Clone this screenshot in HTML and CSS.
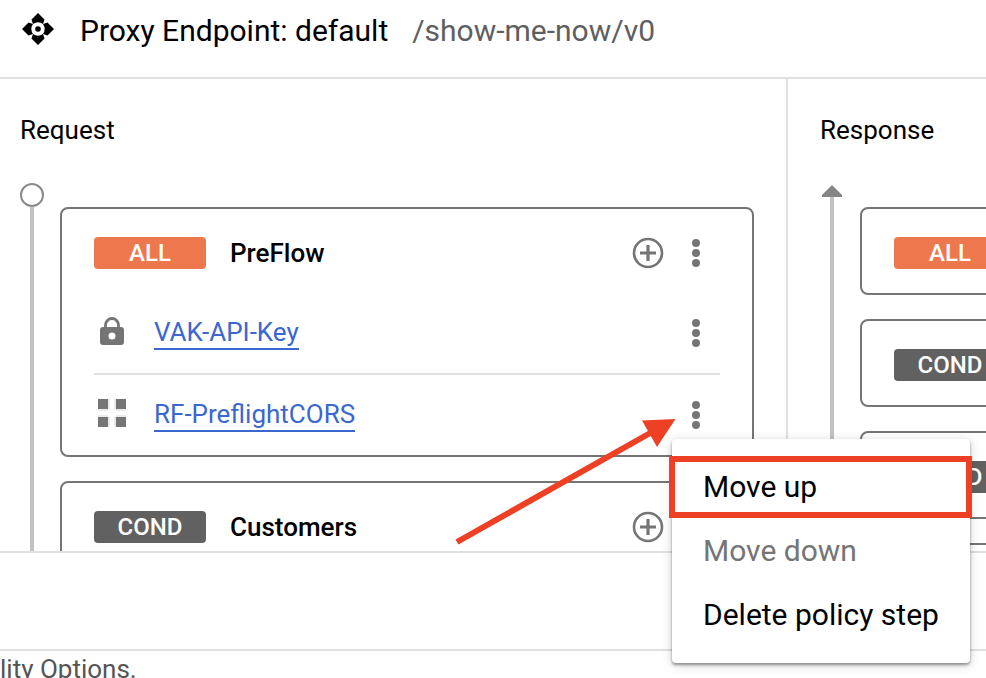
FILE: index.html
```html
<!DOCTYPE html>
<html lang="en">
<head>
<meta charset="utf-8">
<title>Proxy Endpoint: default</title>
<link rel="stylesheet" href="styles.css">
</head>
<body>
<svg class="sprite" aria-hidden="true">
  <symbol id="kebab" viewBox="0 0 48 48">
    <circle cx="24" cy="14" r="4"/><circle cx="24" cy="24" r="4"/><circle cx="24" cy="34" r="4"/>
  </symbol>
  <symbol id="plus" viewBox="0 0 48 48">
    <circle cx="24" cy="24" r="14" fill="none" stroke="currentColor" stroke-width="2.6"/>
    <path d="M24 16v16M16 24h16" stroke="currentColor" stroke-width="3.2"/>
  </symbol>
</svg>

<header class="topbar">
  <svg class="endpoint-icon" viewBox="0 0 32 32" aria-hidden="true">
    <path d="M16 0l6.500 6.500L21 11a9 9 0 0 0-10 0L9.500 6.500z"/>
    <path d="M16 32l6.500-6.500L21 21a9 9 0 0 1-10 0L9.500 25.500z"/>
    <path d="M0 16l6.500-6.500L11 11a9 9 0 0 0 0 10L6.500 22.500z"/>
    <path d="M32 16l-6.500-6.500L21 11a9 9 0 0 1 0 10L25.500 22.500z"/>
    <circle cx="16" cy="16" r="2.800"/>
  </svg>
  <h1 class="title">Proxy Endpoint: default</h1>
  <span class="path">/show-me-now/v0</span>
</header>

<main class="flows">
  <section class="panel">
    <h2 class="panel-title">Request</h2>
    <div class="track">
      <div class="rail">
        <svg class="rail-start" viewBox="0 0 24 24" aria-hidden="true"><circle cx="12" cy="12" r="11"/></svg>
      </div>
      <div class="cards">
        <article class="card">
          <div class="card-head">
            <span class="badge badge-all">ALL</span>
            <h3 class="card-name">PreFlow</h3>
            <button class="icon-button" type="button" aria-label="Add step"><svg><use href="#plus"/></svg></button>
            <button class="icon-button" type="button" aria-label="Flow actions"><svg><use href="#kebab"/></svg></button>
          </div>
          <ul class="steps">
            <li class="step">
              <svg class="step-icon" viewBox="0 0 36 36" aria-hidden="true">
                <path fill-rule="evenodd" d="M9 12h18q3 0 3 3V27q0 3-3 3H9q-3 0-3-3V15q0-3 3-3zM18 17.500a3.500 3.500 0 1 0 0 7a3.500 3.500 0 0 0 0-7z"/>
                <path d="M11.500 14V10a6.500 6.500 0 0 1 13 0V14" fill="none" stroke="currentColor" stroke-width="2.800"/>
              </svg>
              <a class="step-link" href="#vak-api-key">VAK-API-Key</a>
              <button class="icon-button" type="button" aria-label="VAK-API-Key actions"><svg><use href="#kebab"/></svg></button>
            </li>
            <li class="step">
              <svg class="step-icon" viewBox="0 0 36 36" aria-hidden="true">
                <path d="M4 2h10v10H4zM22 2h10v10H22zM4 20h10v10H4zM22 20h10v10H22z"/>
                <path opacity=".15" d="M14 2h2v10h-2zM20 2h2v10h-2zM14 20h2v10h-2zM20 20h2v10h-2zM4 12h10v2H4zM22 12h10v2H22zM4 18h10v2H4zM22 18h10v2H22z"/>
              </svg>
              <a class="step-link" href="#rf-preflightcors">RF-PreflightCORS</a>
              <button class="icon-button" type="button" aria-label="RF-PreflightCORS actions" aria-haspopup="menu" aria-expanded="true"><svg><use href="#kebab"/></svg></button>
            </li>
          </ul>
        </article>
        <article class="card">
          <div class="card-head">
            <span class="badge badge-cond">COND</span>
            <h3 class="card-name">Customers</h3>
            <button class="icon-button" type="button" aria-label="Add step"><svg><use href="#plus"/></svg></button>
            <button class="icon-button" type="button" aria-label="Flow actions"><svg><use href="#kebab"/></svg></button>
          </div>
        </article>
      </div>
    </div>
  </section>

  <section class="panel panel-response">
    <h2 class="panel-title">Response</h2>
    <div class="track">
      <div class="rail">
        <svg class="rail-start rail-arrow" viewBox="0 0 24 24" aria-hidden="true"><path d="M12 2L22 12v2H2v-2z"/></svg>
      </div>
      <div class="cards">
        <article class="card"><div class="card-head"><span class="badge badge-all">ALL</span></div></article>
        <article class="card"><div class="card-head"><span class="badge badge-cond">COND</span></div></article>
        <article class="card"><div class="card-head"><span class="badge badge-cond">COND</span></div></article>
        <article class="card"><div class="card-head"><span class="badge badge-cond">COND</span></div></article>
      </div>
    </div>
  </section>
</main>

<div class="strip"></div>
<footer class="footer">lity Options.</footer>

<div class="menu" role="menu">
  <button class="menu-item menu-item-marked" type="button" role="menuitem">Move up</button>
  <button class="menu-item" type="button" role="menuitem" disabled>Move down</button>
  <button class="menu-item" type="button" role="menuitem">Delete policy step</button>
</div>

<svg class="pointer" viewBox="0 0 222 130" aria-hidden="true">
  <path d="M3 126L198 16" stroke="currentColor" stroke-width="6"/>
  <path d="M188 4.500L221.500 3L203 31z"/>
</svg>
</body>
</html>
```
FILE: styles.css
```css
* {
  box-sizing: border-box;
}

body {
  position: relative;
  display: flex;
  flex-direction: column;
  height: 100vh;
  margin: 0;
  overflow: hidden;
  background: #fff;
  color: #000;
  font-family: Roboto, "Liberation Sans", sans-serif;
  font-size: 26px;
  line-height: 32px;
}

h1, h2, h3, ul {
  margin: 0;
  padding: 0;
  font-size: inherit;
  font-weight: 400;
}

button {
  padding: 0;
  border: 0;
  background: none;
  color: inherit;
  font: inherit;
}

svg {
  display: block;
  fill: currentColor;
}

.sprite {
  position: absolute;
  width: 0;
  height: 0;
}

.topbar {
  display: flex;
  align-items: center;
  flex: none;
  padding: 11px 22px 30px;
  border-bottom: 2px solid #e0e0e0;
  font-size: 30px;
}

.endpoint-icon {
  width: 32px;
  height: 32px;
}

.title {
  margin: 4px 24px 0 26px;
}

.path {
  margin-top: 4px;
  color: #5f5f5f;
}

.flows {
  display: grid;
  grid-template-columns: minmax(0, 1fr) 198px;
  flex: 1;
  min-height: 0;
  overflow: hidden;
}

.panel {
  display: flex;
  flex-direction: column;
  padding: 35px 32px 0 20px;
  border-right: 2px solid #e0e0e0;
  overflow: hidden;
}

.panel-response {
  padding: 35px 0 0 32px;
  border-right: 0;
}

.panel-title {
  margin-bottom: 37px;
}

.track {
  display: flex;
  flex: 1;
  gap: 16px;
}

.rail {
  flex: none;
  width: 24px;
  background: linear-gradient(#c2c2c2, #c2c2c2) center / 4px 100% no-repeat;
}

.rail-start {
  width: 24px;
  height: 24px;
  background: #fff;
  fill: #fff;
  stroke: #8a8a8a;
  stroke-width: 2px;
}

.rail-arrow {
  background: linear-gradient(#fff, #fff) top / 100% 6px no-repeat;
  fill: #858585;
  stroke: none;
}

.cards {
  display: flex;
  flex: 1;
  flex-direction: column;
  gap: 24px;
  padding-top: 24px;
}

.card {
  flex: none;
  min-width: 320px;
  padding: 4px 32px 0;
  border: 2px solid #757575;
  border-radius: 8px;
}

.card-head,
.step {
  display: flex;
  align-items: center;
  height: 80px;
}

.badge {
  width: 112px;
  margin-right: 24px;
  border-radius: 4px;
  color: #fff;
  font-size: 24px;
  font-weight: 500;
  text-align: center;
}

.badge-all {
  background: #ee784e;
}

.badge-cond {
  background: #616161;
}

.card-name {
  flex: 1;
  font-weight: 500;
}

.icon-button,
.icon-button svg {
  width: 48px;
  height: 48px;
  color: #757575;
}

.steps {
  list-style: none;
}

.step + .step {
  height: 82px;
  border-top: 2px solid #e0e0e0;
}

.step-icon {
  width: 36px;
  height: 36px;
  margin-right: 24px;
  color: #757575;
}

.step-link {
  margin-right: auto;
  border-bottom: 2px solid #3b67cf;
  color: #3b67cf;
  text-decoration: none;
}

.strip {
  flex: none;
  height: 98px;
  border-top: 2px solid #e0e0e0;
}

.footer {
  flex: none;
  height: 29px;
  padding: 2px 0;
  border-top: 2px solid #e0e0e0;
  color: #555;
}

.menu {
  position: absolute;
  top: 439px;
  right: 16px;
  width: 298px;
  padding: 16px 0;
  border-radius: 4px;
  background: #fff;
  box-shadow: 0 2px 3px rgba(0, 0, 0, 0.4), 0 2px 12px rgba(0, 0, 0, 0.16);
  font-size: 30px;
}

.menu-item {
  position: relative;
  display: block;
  width: 100%;
  height: 64px;
  padding: 0 0 0 31px;
  text-align: left;
  white-space: nowrap;
}

.menu-item:disabled {
  color: #757575;
}

.menu-item-marked::after {
  position: absolute;
  inset: 1px -2px 1px -3px;
  border: 6px solid #ee4025;
  content: "";
}

.pointer {
  position: absolute;
  top: 416px;
  left: 454px;
  width: 222px;
  height: 130px;
  color: #ee4025;
}
```
